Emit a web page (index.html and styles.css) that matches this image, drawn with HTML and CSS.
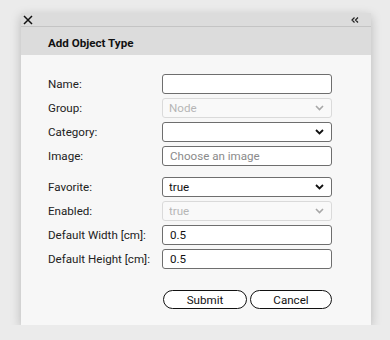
FILE: index.html
```html
<!DOCTYPE html>
<html lang="en">
<head>
    <meta charset="UTF-8">
    <meta name="viewport" content="width=device-width, initial-scale=1.0">
    <title>Add Object Type</title>
    <link rel="stylesheet" href="styles.css">
</head>
<body>
    <div class="dialog">
        <div class="titlebar">
            <svg class="close" width="10" height="10" viewBox="0 0 10 10"><path d="M1 1l8 8M9 1l-8 8" stroke="#111" stroke-width="1.5"/></svg>
            <svg class="collapse" width="8" height="6" viewBox="0 0 8 6"><path d="M3.5 0.5L1 3l2.5 2.5M7 0.5L4.5 3 7 5.5" fill="none" stroke="#222" stroke-width="1.2"/></svg>
        </div>
        <div class="header">Add Object Type</div>
        <form class="content" id="form">
            <div class="grid">
                <label for="name">Name:</label>
                <input id="name" type="text">

                <label for="group">Group:</label>
                <div class="sel disabled">
                    <select id="group" disabled><option>Node</option></select>
                    <svg class="chev" width="9" height="6" viewBox="0 0 9 6"><path d="M1 1l3.5 3.5L8 1" fill="none" stroke="currentColor" stroke-width="1.6"/></svg>
                </div>

                <label for="category">Category:</label>
                <div class="sel">
                    <select id="category"><option></option></select>
                    <svg class="chev" width="9" height="6" viewBox="0 0 9 6"><path d="M1 1l3.5 3.5L8 1" fill="none" stroke="currentColor" stroke-width="1.8"/></svg>
                </div>

                <label for="image">Image:</label>
                <input id="image" type="text" placeholder="Choose an image">
            </div>

            <div class="grid second">
                <label for="favorite">Favorite:</label>
                <div class="sel">
                    <select id="favorite"><option>true</option><option>false</option></select>
                    <svg class="chev" width="9" height="6" viewBox="0 0 9 6"><path d="M1 1l3.5 3.5L8 1" fill="none" stroke="currentColor" stroke-width="1.8"/></svg>
                </div>

                <label for="enabled">Enabled:</label>
                <div class="sel disabled">
                    <select id="enabled" disabled><option>true</option></select>
                    <svg class="chev" width="9" height="6" viewBox="0 0 9 6"><path d="M1 1l3.5 3.5L8 1" fill="none" stroke="currentColor" stroke-width="1.6"/></svg>
                </div>

                <label for="width">Default Width [cm]:</label>
                <input id="width" type="text" value="0.5">

                <label for="height">Default Height [cm]:</label>
                <input id="height" type="text" value="0.5">
            </div>

            <div class="buttons">
                <button type="submit" class="btn submit">Submit</button>
                <button type="button" class="btn cancel">Cancel</button>
            </div>
        </form>
    </div>
</body>
</html>
```

FILE: styles.css
```css
body {
    margin: 0;
    padding: 13px 19px 0 21px;
    background-color: #ebebeb;
    font-family: Roboto, "Liberation Sans", sans-serif;
    font-size: 11.6px;
    color: #222;
}

.dialog {
    width: 350px;
    height: 312px;
    background-color: #f7f7f7;
    box-shadow: 0 3px 10px rgba(0, 0, 0, 0.22);
    display: flex;
    flex-direction: column;
}

.titlebar {
    height: 13px;
    display: flex;
    justify-content: space-between;
    align-items: center;
    background-color: #dcdcdc;
    border-bottom: 1px solid #c4c4c4;
    padding: 0 12px 0 2px;
}

.collapse {
    margin-top: 1px;
}

.header {
    height: 28px;
    line-height: 32px;
    padding-left: 27px;
    background-color: #dcdcdc;
    font-weight: bold;
    font-size: 11.6px;
    color: #111;
}

.content {
    padding: 19px 0 0 27px;
}

.grid {
    display: grid;
    grid-template-columns: 114px 170px;
    grid-auto-rows: 20px;
    row-gap: 4px;
    align-items: center;
}

.second {
    margin-top: 11px;
}

label {
    color: #222;
}

input[type=text],
select {
    box-sizing: border-box;
    width: 170px;
    height: 20px;
    border: 1px solid #6e6e6e;
    border-radius: 3px;
    background-color: #fff;
    font-family: inherit;
    font-size: 11.6px;
    color: #111;
    padding: 0 7px;
    outline: none;
}

input::placeholder {
    color: #8a8a8a;
}

.sel {
    position: relative;
    height: 20px;
}

select {
    appearance: none;
    -webkit-appearance: none;
    padding: 0 6px;
}

.chev {
    position: absolute;
    right: 8px;
    top: 7px;
    color: #111;
    pointer-events: none;
}

.disabled select {
    border-color: #cfcfcf;
    color: #9a9a9a;
    background-color: #fafafa;
}

.disabled .chev {
    color: #a8a8a8;
}

.buttons {
    display: flex;
    gap: 3px;
    margin-top: 21px;
    padding-left: 115px;
}

.btn {
    height: 19px;
    border: 1px solid #111;
    border-radius: 10px;
    background-color: #fff;
    font-family: inherit;
    font-size: 11.6px;
    color: #111;
    padding: 0;
}

.submit {
    width: 84px;
}

.cancel {
    width: 82px;
}
```
